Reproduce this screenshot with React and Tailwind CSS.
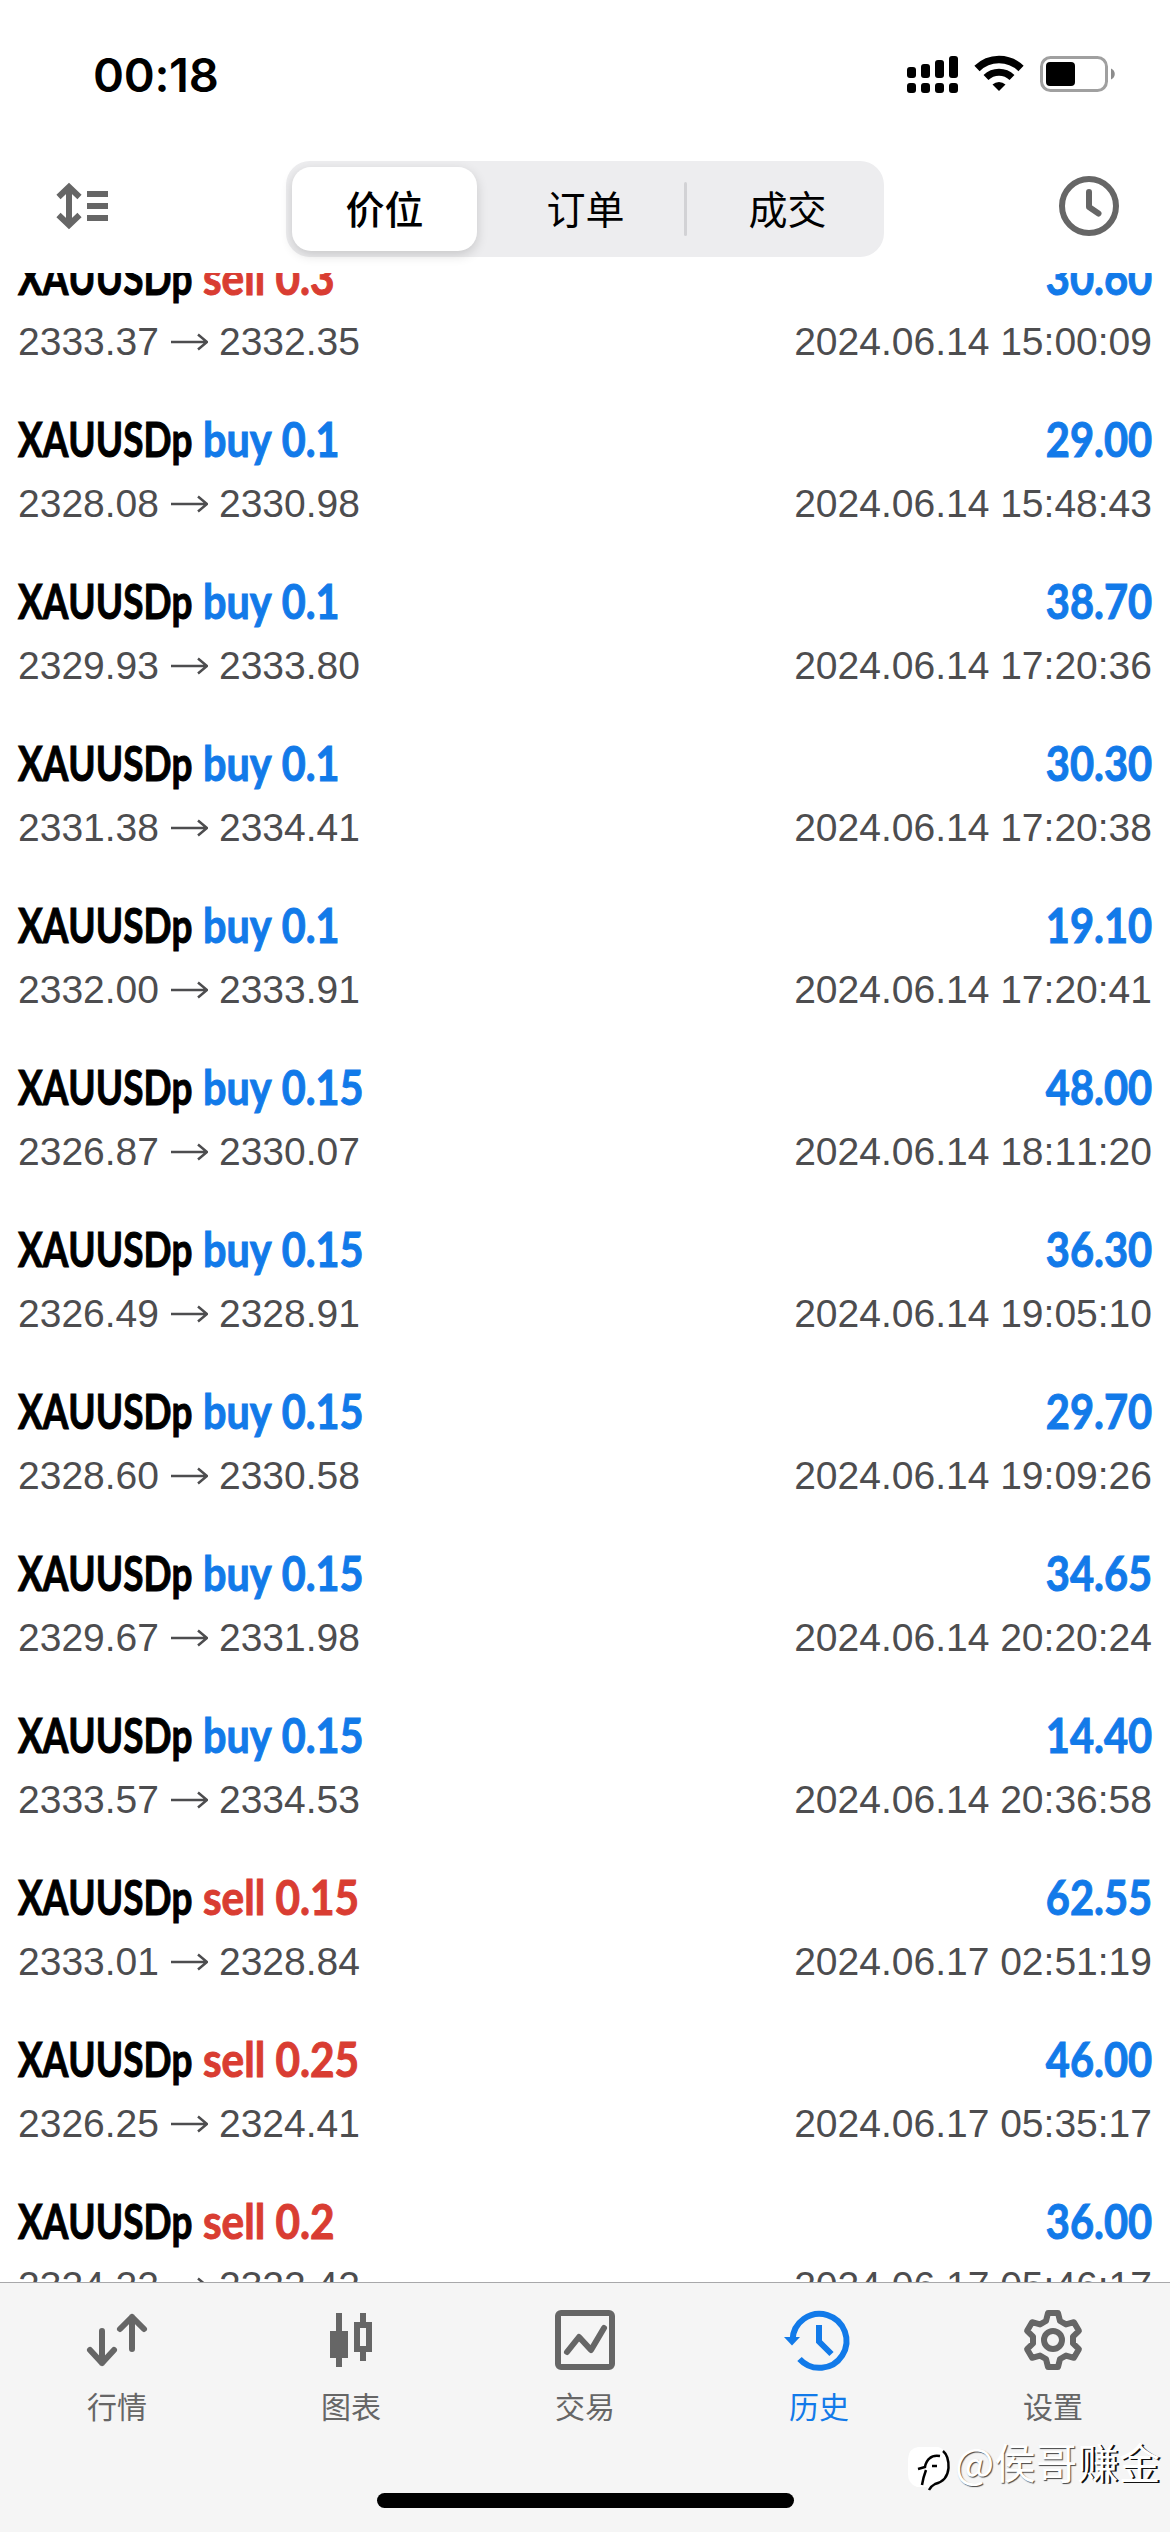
import React from 'react';

const deals = [
  { type: 'sell', lots: '0.3', open: '2333.37', close: '2332.35', time: '2024.06.14 15:00:09', profit: '30.60' },
  { type: 'buy', lots: '0.1', open: '2328.08', close: '2330.98', time: '2024.06.14 15:48:43', profit: '29.00' },
  { type: 'buy', lots: '0.1', open: '2329.93', close: '2333.80', time: '2024.06.14 17:20:36', profit: '38.70' },
  { type: 'buy', lots: '0.1', open: '2331.38', close: '2334.41', time: '2024.06.14 17:20:38', profit: '30.30' },
  { type: 'buy', lots: '0.1', open: '2332.00', close: '2333.91', time: '2024.06.14 17:20:41', profit: '19.10' },
  { type: 'buy', lots: '0.15', open: '2326.87', close: '2330.07', time: '2024.06.14 18:11:20', profit: '48.00' },
  { type: 'buy', lots: '0.15', open: '2326.49', close: '2328.91', time: '2024.06.14 19:05:10', profit: '36.30' },
  { type: 'buy', lots: '0.15', open: '2328.60', close: '2330.58', time: '2024.06.14 19:09:26', profit: '29.70' },
  { type: 'buy', lots: '0.15', open: '2329.67', close: '2331.98', time: '2024.06.14 20:20:24', profit: '34.65' },
  { type: 'buy', lots: '0.15', open: '2333.57', close: '2334.53', time: '2024.06.14 20:36:58', profit: '14.40' },
  { type: 'sell', lots: '0.15', open: '2333.01', close: '2328.84', time: '2024.06.17 02:51:19', profit: '62.55' },
  { type: 'sell', lots: '0.25', open: '2326.25', close: '2324.41', time: '2024.06.17 05:35:17', profit: '46.00' },
  { type: 'sell', lots: '0.2', open: '2324.22', close: '2322.42', time: '2024.06.17 05:46:17', profit: '36.00' },
];

function StatusBar() {
  return (
    <div className="flex h-[148px] shrink-0 items-center justify-between pr-[54px] pl-[93px]">
      <span className="font-['Inter'] text-[47px] leading-none font-semibold tracking-[-0.3px] text-black">00:18</span>
      <svg width="210" height="40" viewBox="906 54 210 40">
        <g fill="#000">
          <rect x="907" y="67" width="9" height="11" rx="3" />
          <rect x="921" y="64" width="9" height="14" rx="3" />
          <rect x="935" y="60" width="9" height="18" rx="3" />
          <rect x="949" y="56" width="9" height="22" rx="3" />
          <rect x="907" y="83" width="9" height="10" rx="3" />
          <rect x="921" y="83" width="9" height="10" rx="3" />
          <rect x="935" y="83" width="9" height="10" rx="3" />
          <rect x="949" y="83" width="9" height="10" rx="3" />
          <path d="M992.5 84.5a9.4 9.4 0 0 1 13 0l-6.5 6.5z" />
          <rect x="1046" y="62" width="29" height="24" rx="4" />
        </g>
        <path d="M977 68.5a31.3 31.3 0 0 1 44 0" fill="none" stroke="#000" strokeWidth="7.5" />
        <path d="M986 77.5a18.6 18.6 0 0 1 26 0" fill="none" stroke="#000" strokeWidth="7" />
        <rect x="1041.5" y="57.5" width="65" height="33" rx="9" fill="none" stroke="#a0a0a0" strokeWidth="3" />
        <path d="M1111 68.5c5 1.800 5 9.200 0 11z" fill="#8c8c8c" />
      </svg>
    </div>
  );
}

function Header() {
  return (
    <div className="flex h-[125px] shrink-0 pl-[56px]">
      <svg className="mt-[34px]" width="54" height="48" viewBox="56 182 54 48">
        <g fill="none" stroke="#666" strokeWidth="6">
          <path d="M69 187v38M58.500 197l10.500-10 10.500 10M58.500 215l10.500 10 10.500-10" />
          <path d="M87 194h21M87 206h21M87 218h21" />
        </g>
      </svg>
      <div className="mt-[13px] ml-[176px] flex h-24 w-[598px] rounded-[24px] bg-[#ededef] font-['Noto_Sans_CJK_SC',sans-serif] text-[39px] leading-none text-black">
        <div className="mt-1.5 ml-1.5 flex h-[84px] w-[185px] items-center justify-center rounded-[19px] bg-white pb-1 font-medium shadow-[0_4px_12px_rgba(0,0,0,0.16)]">价位</div>
        <div className="flex w-[207px] items-center justify-center pb-1 pl-[10px]">订单</div>
        <div className="mt-[21px] h-[54px] w-[3px] rounded bg-[#d2d2d5]" />
        <div className="flex flex-1 items-center justify-center pb-1 pl-[4px]">成交</div>
      </div>
      <svg className="mt-[27px] ml-[174px]" width="62" height="62" viewBox="0 0 62 62">
        <g fill="none" stroke="#666" strokeWidth="6" strokeLinecap="round" strokeLinejoin="round">
          <circle cx="31" cy="31" r="27" />
          <path d="M31 17v15l9.500 6.500" />
        </g>
      </svg>
    </div>
  );
}

function Deal({ deal }) {
  return (
    <div className="h-[162px] shrink-0 pr-[18px] pl-[18px]">
      <div className="flex h-[60px] pt-[2px] font-['Lato'] text-[47px] leading-[60px] font-bold whitespace-nowrap [font-kerning:none] [-webkit-text-stroke:1px_currentColor]">
        <div className="w-[185px] text-black">
          <div className="w-max origin-left scale-x-[0.785]">XAUUSDp</div>
        </div>
        <div className={`w-max origin-left ${deal.type === 'buy' ? 'scale-x-[0.88] text-[#127ae9]' : 'scale-x-[0.9] text-[#d93d32]'}`}>
          {deal.type} {deal.lots}
        </div>
        <div className="ml-auto origin-right scale-x-[0.885] text-[#127ae9]">{deal.profit}</div>
      </div>
      <div className="mt-[7px] flex h-[60px] items-center justify-between font-['Liberation_Sans'] text-[39px] leading-[60px] text-[#4d4d4f] [font-kerning:none]">
        <div className="flex items-center">
          <span>{deal.open}</span>
          <svg className="mr-[11px] ml-[11px]" width="38" height="20" viewBox="0 0 38 20">
            <path d="M1 10h36M28 2.500l9 7.500-9 7.500" fill="none" stroke="#4d4d4f" strokeWidth="2.500" />
          </svg>
          <span>{deal.close}</span>
        </div>
        <span>{deal.time}</span>
      </div>
    </div>
  );
}

const tabs = [
  {
    label: '行情',
    icon: (
      <g fill="none" strokeWidth="6" strokeLinecap="round" strokeLinejoin="round">
        <path d="M15 21v32M3 40l12 13 12-13M45 39V7M33 19L45 7l12 12" />
      </g>
    ),
  },
  {
    label: '图表',
    icon: (
      <g fill="none" strokeWidth="6">
        <path d="M18 3v18M18 46v11M42 3v12M42 39v12" />
        <rect x="12" y="24" width="12" height="21" fill="#666" />
        <rect x="36" y="15" width="12" height="24" />
      </g>
    ),
  },
  {
    label: '交易',
    icon: (
      <g fill="none" strokeWidth="6" strokeLinecap="round" strokeLinejoin="round">
        <rect x="3" y="3" width="54" height="54" rx="3" />
        <path d="M12 42l12-15 12 13L49 18" />
      </g>
    ),
  },
  {
    label: '历史',
    active: true,
    icon: (
      <g fill="none" strokeWidth="6">
        <path d="M3.500 30a27 27 0 1 1 7 19" />
        <path d="M30 15v16.500L42.500 44" />
        <path d="M-5 27H11L3 35.500z" fill="#127ae9" stroke="none" />
      </g>
    ),
  },
  {
    label: '设置',
    icon: (
      <g fill="none" strokeWidth="6" strokeLinejoin="round" transform="translate(30 30)">
        <path d="M-5-27H5L7-19 13-15.600 20.900-17.800 25.900-9.200 20-3.400V3.400L25.900 9.200 20.900 17.800 13 15.600 7 19 5 27H-5L-7 19-13 15.600-20.900 17.800-25.900 9.200-20 3.400V-3.400L-25.900-9.200-20.900-17.800-13-15.600-7-19z" />
        <circle r="9" />
      </g>
    ),
  },
];

function TabBar() {
  return (
    <div className="relative flex h-[250px] shrink-0 flex-col items-center border-t border-[#a8a8aa] bg-[#f5f5f5]">
      <div className="flex h-[210px] w-full pt-[27px]">
        {tabs.map(tab => (
          <div key={tab.label} className={`flex w-[234px] flex-col items-center ${tab.active ? 'text-[#127ae9]' : 'text-[#666]'}`}>
            <svg className="overflow-visible" width="60" height="60" viewBox="0 0 60 60" stroke="currentColor">{tab.icon}</svg>
            <span className="mt-[20px] font-['Noto_Sans_CJK_SC',sans-serif] text-[30px] leading-[30px]">{tab.label}</span>
          </div>
        ))}
      </div>
      <div className="h-[15px] w-[417px] rounded-full bg-black" />
      <Watermark />
    </div>
  );
}

function Watermark() {
  return (
    <div className="absolute top-[155px] left-[908px] flex items-start whitespace-nowrap">
      <svg className="mt-[8px]" width="44" height="50" viewBox="0 0 44 50">
        <path d="M10 1h20q9 2 10 16q0 20-15 22l-3 6-3-4H9Q0 38 0 28V13Q1 2 10 1z" fill="#fff" />
        <path d="M35 5q6 5 5.500 17-1 13-13.500 16-4 2-6 6" fill="none" stroke="#000" strokeWidth="2.500" />
        <path d="M10 23l7-2q1-6 5-9 3-3 10-2M18 24q-3 8-4 15M24 20h5" fill="none" stroke="#000" strokeWidth="2.500" />
      </svg>
      <span className="ml-[3px] font-['Noto_Sans_CJK_SC',sans-serif] text-[41.500px] leading-[46px] text-white [text-shadow:1px_1px_1px_#444]">@侯哥</span>
      <span className="font-['Noto_Sans_CJK_SC',sans-serif] text-[41.500px] leading-[46px] text-white [text-shadow:2px_1px_0_#111]">赚金</span>
    </div>
  );
}

function App() {
  return (
    <div className="flex h-[2532px] w-[1170px] flex-col overflow-hidden bg-white">
      <StatusBar />
      <Header />
      <div className="flex min-h-0 flex-1 flex-col overflow-hidden">
        <div className="-mt-[28px]">
          {deals.map(deal => <Deal key={deal.time} deal={deal} />)}
        </div>
      </div>
      <TabBar />
    </div>
  );
}

export default App;
